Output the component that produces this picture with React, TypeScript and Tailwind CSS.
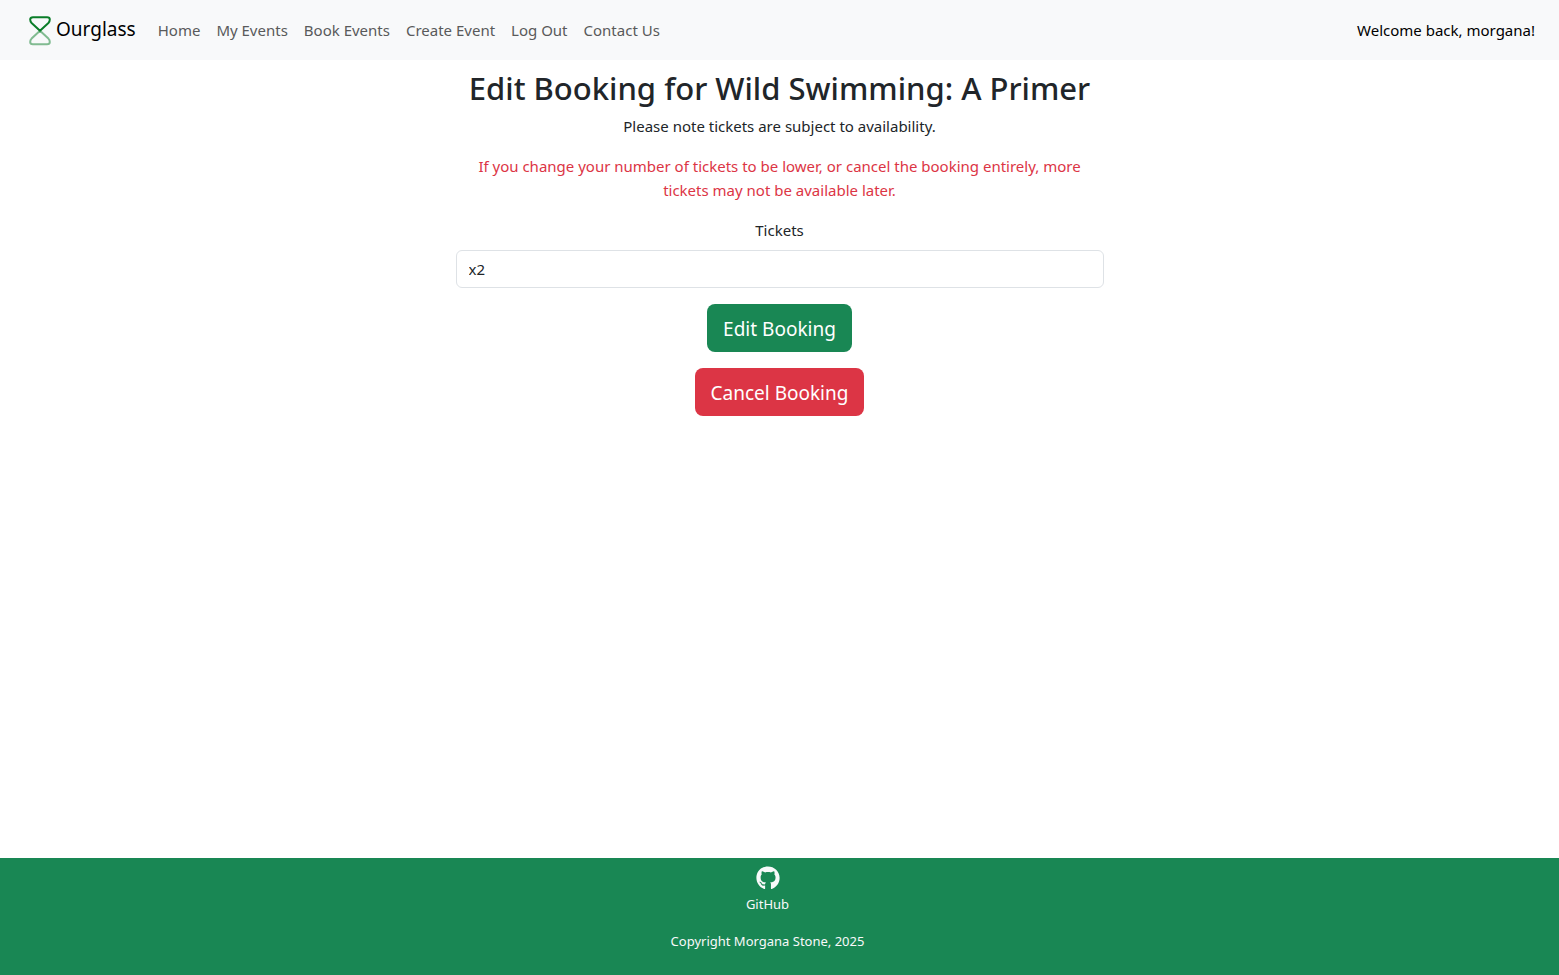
import { FaGithub } from "react-icons/fa";

const links = ["Home", "My Events", "Book Events", "Create Event", "Log Out", "Contact Us"];

function HourglassLogo() {
  return (
    <svg
      viewBox="0 0 32 32"
      className="size-8"
      fill="none"
      stroke="#0a7d28"
      strokeWidth="2"
      strokeLinejoin="round"
      aria-hidden="true"
    >
      <path d="M16 16.8 L7.6 9 C6.5 7.9 6.2 6.9 6.2 5.6 C6.2 4.1 7.2 3.3 9 3.3 H23 C24.8 3.3 25.8 4.1 25.8 5.6 C25.8 6.9 25.5 7.9 24.4 9 Z" />
      <path
        opacity="0.5"
        d="M16 16.8 L7.6 24.6 C6.5 25.7 6.2 26.7 6.2 28 C6.2 29.5 7.2 30.3 9 30.3 H23 C24.8 30.3 25.8 29.5 25.8 28 C25.8 26.7 25.5 25.7 24.4 24.6 Z"
      />
    </svg>
  );
}

function Navbar() {
  return (
    <nav className="flex h-[60px] items-center justify-between bg-[#f8f9fa] px-6">
      <div className="flex items-center">
        <a href="#" className="mr-3.5 flex items-center text-[19px] leading-[30px] text-black">
          <HourglassLogo />
          <span className="pb-0.5">Ourglass</span>
        </a>
        <ul className="flex">
          {links.map((label) => (
            <li key={label}>
              <a href="#" className="block p-2 text-[#595a5b]">
                {label}
              </a>
            </li>
          ))}
        </ul>
      </div>
      <span className="text-black">Welcome back, morgana!</span>
    </nav>
  );
}

function BookingForm() {
  return (
    <form className="flex flex-col items-center" onSubmit={(e) => e.preventDefault()}>
      <label htmlFor="tickets" className="mb-2">
        Tickets
      </label>
      <select
        id="tickets"
        defaultValue="2"
        className="mb-4 h-[38px] w-full appearance-none rounded-md border border-[#dee2e6] bg-white px-3"
      >
        <option value="1">x1</option>
        <option value="2">x2</option>
        <option value="3">x3</option>
        <option value="4">x4</option>
      </select>
      <button type="submit" className="mb-4 h-12 rounded-lg bg-[#198754] px-4 pt-0.5 text-[19px] text-white">
        Edit Booking
      </button>
      <button type="button" className="h-12 rounded-lg bg-[#dc3545] px-4 pt-0.5 text-[19px] text-white">
        Cancel Booking
      </button>
    </form>
  );
}

export default function App() {
  return (
    <div className="flex min-h-screen flex-col bg-white font-['Segoe_UI','Noto_Sans',sans-serif] text-[15px] leading-6 text-[#212529]">
      <Navbar />
      <main className="mx-auto w-5/12 max-w-[648px] grow pt-2 text-center">
        <h1 className="mb-1.5 text-[31px] leading-10 font-medium whitespace-nowrap">
          Edit Booking for Wild Swimming: A Primer
        </h1>
        <p className="mb-4">Please note tickets are subject to availability.</p>
        <p className="mb-4 px-3 text-[#dc3545]">
          If you change your number of tickets to be lower, or cancel the booking entirely, more tickets may not be
          available later.
        </p>
        <BookingForm />
      </main>
      <footer className="flex flex-col items-center bg-[#198754] pt-2 pr-6 pb-[23px] text-[13px] leading-[21px] text-[#f8f9fa]">
        <a href="#" className="mb-4 flex flex-col items-center gap-1">
          <FaGithub className="size-6" aria-hidden="true" />
          <span>GitHub</span>
        </a>
        <p>Copyright Morgana Stone, 2025</p>
      </footer>
    </div>
  );
}
